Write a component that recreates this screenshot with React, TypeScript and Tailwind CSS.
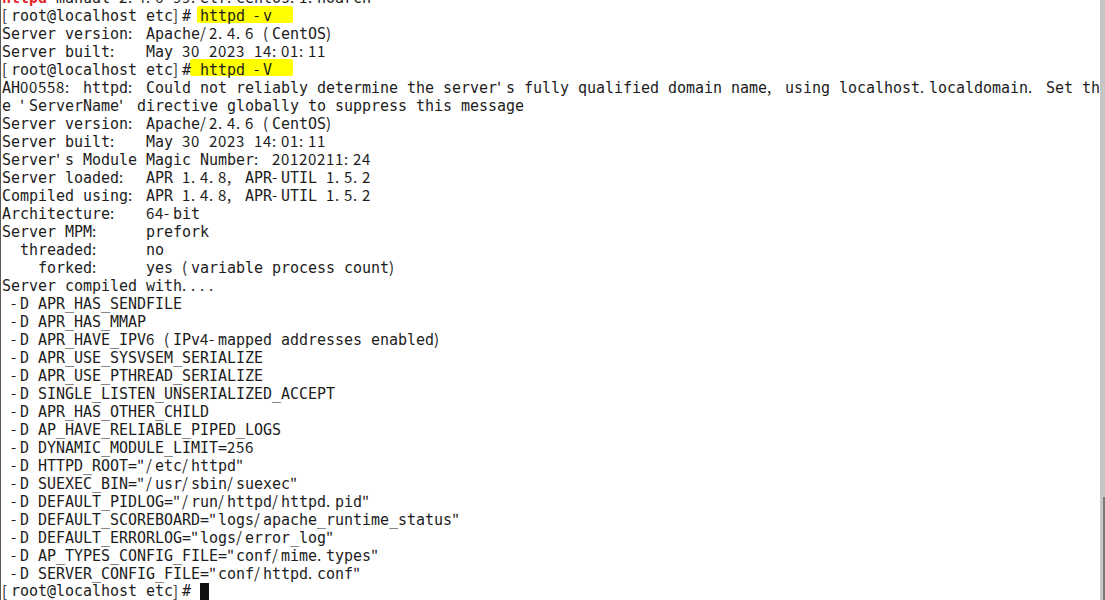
const LINES: string[] = [
  '[root@localhost etc]# httpd -v',
  'Server version: Apache/2.4.6 (CentOS)',
  'Server built:   May 30 2023 14:01:11',
  '[root@localhost etc]# httpd -V',
  "AH00558: httpd: Could not reliably determine the server's fully qualified domain name, using localhost.localdomain. Set th",
  "e 'ServerName' directive globally to suppress this message",
  'Server version: Apache/2.4.6 (CentOS)',
  'Server built:   May 30 2023 14:01:11',
  "Server's Module Magic Number: 20120211:24",
  'Server loaded:  APR 1.4.8, APR-UTIL 1.5.2',
  'Compiled using: APR 1.4.8, APR-UTIL 1.5.2',
  'Architecture:   64-bit',
  'Server MPM:     prefork',
  '  threaded:     no',
  '    forked:     yes (variable process count)',
  'Server compiled with....',
  ' -D APR_HAS_SENDFILE',
  ' -D APR_HAS_MMAP',
  ' -D APR_HAVE_IPV6 (IPv4-mapped addresses enabled)',
  ' -D APR_USE_SYSVSEM_SERIALIZE',
  ' -D APR_USE_PTHREAD_SERIALIZE',
  ' -D SINGLE_LISTEN_UNSERIALIZED_ACCEPT',
  ' -D APR_HAS_OTHER_CHILD',
  ' -D AP_HAVE_RELIABLE_PIPED_LOGS',
  ' -D DYNAMIC_MODULE_LIMIT=256',
  ' -D HTTPD_ROOT="/etc/httpd"',
  ' -D SUEXEC_BIN="/usr/sbin/suexec"',
  ' -D DEFAULT_PIDLOG="/run/httpd/httpd.pid"',
  ' -D DEFAULT_SCOREBOARD="logs/apache_runtime_status"',
  ' -D DEFAULT_ERRORLOG="logs/error_log"',
  ' -D AP_TYPES_CONFIG_FILE="conf/mime.types"',
  ' -D SERVER_CONFIG_FILE="conf/httpd.conf"',
];

// digits and punctuation fall back to the CJK font in this terminal
const CJK = /[0-9:.,\/\-()\[\]"']/;

function Cells({ text, className = '' }: { text: string; className?: string }) {
  return (
    <>
      {Array.from(text).map((ch, i) => (
        <span
          key={i}
          className={
            CJK.test(ch)
              ? `inline-block w-[9px] overflow-visible font-['Noto_Sans_CJK_SC',sans-serif] ${className}`
              : `inline-block w-[9px] overflow-visible ${className}`
          }
        >
          {ch}
        </span>
      ))}
    </>
  );
}

function Line({ text, mark }: { text: string; mark?: 'v' | 'V' }) {
  return (
    <div className="relative h-[18px] leading-[18px] whitespace-pre">
      {mark === 'v' && <span className="absolute left-[195px] top-[0px] h-[17px] w-[96px] bg-[#ffff00] rounded-[2px]" />}
      {mark === 'V' && <span className="absolute left-[188px] top-[-1px] h-[17px] w-[103px] bg-[#ffff00] rounded-[2px]" />}
      <span className="relative">
        <Cells text={text} />
      </span>
    </div>
  );
}

export default function App() {
  return (
    <div className="flex h-[600px] w-[1105px] overflow-hidden bg-white">
      <div className="flex-1 overflow-hidden border-l border-[#5a5a5a] pl-[1px] text-[15px] text-[#1c1c1c] font-['DejaVu_Sans_Mono',monospace]">
        <div className="-mt-[12px]">
          {/* grep output, mostly scrolled off */}
          <div className="h-[18px] leading-[18px] whitespace-pre">
            <Cells text="httpd" className="font-bold text-[#e5262b]" />
            <Cells text="-manual-2.4.6-99.el7.centos.1.noarch" />
          </div>
          {LINES.map((l, i) => (
            <Line key={i} text={l} mark={i === 0 ? 'v' : i === 3 ? 'V' : undefined} />
          ))}
          <div className="flex h-[18px] items-center leading-[18px] whitespace-pre">
            <Cells text="[root@localhost etc]# " />
            <span className="inline-block h-[17px] w-[9px] bg-[#111]" />
          </div>
        </div>
      </div>
      {/* scrollbar */}
      <div className="flex w-[5px] flex-col bg-[#c6c6c6]">
        <div className="h-[497px]" />
        <div className="ml-auto w-[2px] flex-1 bg-[#7a7a7a]" />
      </div>
    </div>
  );
}
